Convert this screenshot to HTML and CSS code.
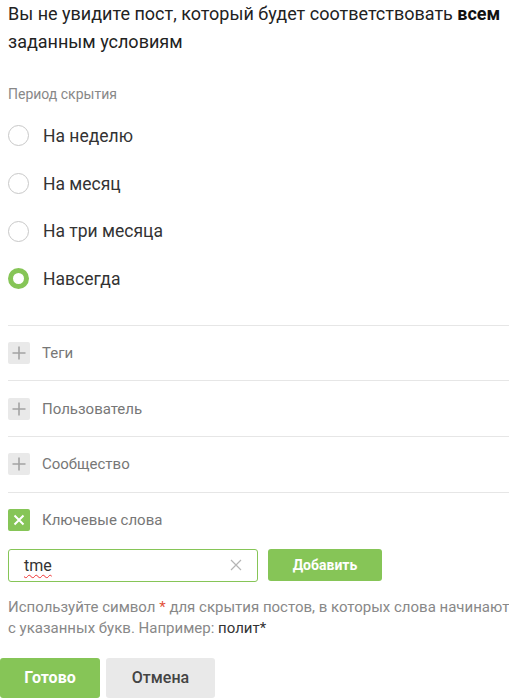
FILE: index.html
```html
<!DOCTYPE html>
<html lang="ru">
<head>
<meta charset="utf-8">
<link rel="stylesheet" href="styles.css">
</head>
<body>
<div class="page">
  <div class="content">
    <p class="intro">Вы не увидите пост, который будет соответствовать <b>всем</b> заданным условиям</p>
    <div class="label">Период скрытия</div>
    <div class="radios">
      <div class="radio"><span class="circle"></span><span>На неделю</span></div>
      <div class="radio"><span class="circle"></span><span>На месяц</span></div>
      <div class="radio"><span class="circle"></span><span>На три месяца</span></div>
      <div class="radio"><span class="circle on"></span><span>Навсегда</span></div>
    </div>
    <div class="filters">
      <div class="filter">
        <span class="fbox"><svg width="22" height="22" viewBox="0 0 22 22"><path d="M11 4.5v13M4.5 11h13" stroke="#a3a3a3" stroke-width="1.6"/></svg></span>
        <span>Теги</span>
      </div>
      <div class="filter">
        <span class="fbox"><svg width="22" height="22" viewBox="0 0 22 22"><path d="M11 4.5v13M4.5 11h13" stroke="#a3a3a3" stroke-width="1.6"/></svg></span>
        <span>Пользователь</span>
      </div>
      <div class="filter">
        <span class="fbox"><svg width="22" height="22" viewBox="0 0 22 22"><path d="M11 4.5v13M4.5 11h13" stroke="#a3a3a3" stroke-width="1.6"/></svg></span>
        <span>Сообщество</span>
      </div>
      <div class="filter">
        <span class="fbox green"><svg width="22" height="22" viewBox="0 0 22 22"><path d="M6.5 6.5l9 9M15.5 6.5l-9 9" stroke="#fff" stroke-width="2"/></svg></span>
        <span>Ключевые слова</span>
      </div>
    </div>
    <div class="addrow">
      <div class="input">
        <span class="value">tme</span>
        <svg class="clear" width="12" height="12" viewBox="0 0 12 12"><path d="M1 1l10 10M11 1L1 11" stroke="#b5b5b5" stroke-width="1.2"/></svg>
      </div>
      <button class="btn add">Добавить</button>
    </div>
    <p class="help">Используйте символ <span class="star">*</span> для скрытия постов, в которых слова начинают с указанных букв. Например: <span class="ex">полит*</span></p>
  </div>
  <div class="actions">
    <button class="btn done">Готово</button>
    <button class="btn cancel">Отмена</button>
  </div>
</div>
</body>
</html>
```

FILE: styles.css
```css
* { box-sizing: border-box; }
html, body { margin: 0; padding: 0; background: #fff; }
body {
  font-family: Roboto, "Liberation Sans", Arial, sans-serif;
  color: #222;
  width: 509px;
  height: 698px;
  overflow: hidden;
}
.page { width: 509px; overflow: hidden; }
.content { padding: 0 0 0 8px; }
.intro {
  margin: 0;
  width: 501px;
  font-size: 18px;
  line-height: 28px;
  color: #222;
}
.intro b { font-weight: 700; color: #111; }
.label {
  margin-top: 28px;
  font-size: 14px;
  line-height: 20px;
  color: #888;
}
.radios {
  margin-top: 8px;
  display: flex;
  flex-direction: column;
}
.radio {
  height: 47.7px;
  display: flex;
  align-items: center;
  gap: 14px;
  font-size: 17.5px;
  color: #333;
}
.circle {
  width: 21px;
  height: 21px;
  border-radius: 50%;
  border: 1px solid #c8c8c8;
  background: #fff;
  flex: none;
}
.circle.on { border: 5px solid #86c557; }
.filters { margin-top: 22px; width: 501px; }
.filter {
  height: 55.7px;
  border-top: 1px solid #e6e6e6;
  display: flex;
  align-items: center;
  gap: 12px;
  font-size: 15px;
  color: #777;
}
.fbox {
  width: 22px;
  height: 22px;
  background: #e9e9e9;
  border-radius: 2px;
  display: flex;
  flex: none;
}
.fbox.green { background: #86c557; }
.addrow {
  margin-top: 1px;
  display: flex;
  align-items: center;
  gap: 10px;
}
.input {
  width: 250px;
  height: 33px;
  border: 1px solid #86c557;
  border-radius: 3px;
  display: flex;
  align-items: center;
  justify-content: space-between;
  padding: 0 15px 0 15px;
  font-size: 16px;
  color: #333;
}
.value {
  text-decoration: underline wavy #e33;
  text-decoration-thickness: 1px;
  text-underline-offset: 3px;
}
.btn {
  font-family: Roboto, "Liberation Sans", Arial, sans-serif;
  border: none;
  border-radius: 3px;
  font-weight: 700;
  cursor: pointer;
  padding: 0;
}
.add {
  width: 114px;
  height: 32px;
  background: #86c557;
  color: #fff;
  font-size: 14px;
}
.help {
  margin: 15px 0 0;
  width: 508px;
  font-size: 15px;
  line-height: 21px;
  color: #888;
}
.star { color: #e2513a; }
.ex { color: #333; }
.actions {
  margin-top: 19px;
  display: flex;
  gap: 6px;
}
.done {
  width: 100px;
  height: 40px;
  background: #86c557;
  color: #fff;
  font-size: 16px;
}
.cancel {
  width: 109px;
  height: 40px;
  background: #e9e9e9;
  color: #444;
  font-size: 16px;
  font-weight: 500;
}
```
